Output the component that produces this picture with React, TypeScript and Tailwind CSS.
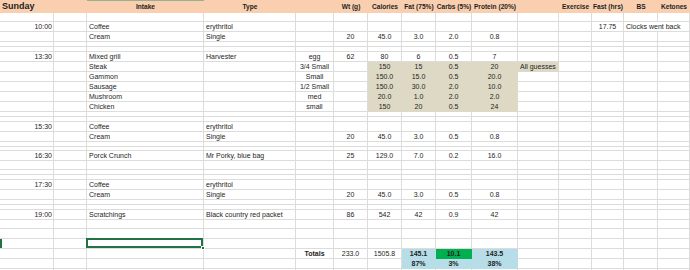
import React from "react";

type Cell = {
  t?: string;
  a?: "l" | "c" | "r";
  b?: boolean;
  fill?: string;
  nr?: boolean;
  sel?: boolean;
  rowSel?: boolean;
};

type Row = { h: string; cells: Record<number, Cell> };

const cols =
  "grid-cols-[54px_33px_117px_92px_38px_34px_34px_34px_36px_46px_41px_33px_32px_34px_1fr]";

const tan = "bg-[#ddd9c4] border-[#ddd9c4]";
const blue = "bg-[#b7dee8] border-[#b7dee8]";
const green = "bg-[#00b050] border-[#00b050]";

const r = (h: string, cells: Record<number, Cell> = {}): Row => ({ h, cells });

// numbers in F..J are centred
const nums = (vals: string[], fill?: string, from = 5): Record<number, Cell> => {
  const out: Record<number, Cell> = {};
  vals.forEach((v, i) => {
    if (v !== "") out[from + i] = { t: v, a: "c", fill: i >= 1 ? fill : undefined };
  });
  return out;
};

const tanRow = (
  name: string,
  size: string,
  vals: string[],
  extra: Record<number, Cell> = {}
): Row =>
  r("h-[10px]", {
    2: { t: name },
    4: { t: size, a: "c" },
    6: { t: vals[0], a: "c", fill: tan },
    7: { t: vals[1], a: "c", fill: tan },
    8: { t: vals[2], a: "c", fill: tan },
    9: { t: vals[3], a: "c", fill: tan },
    ...extra,
  });

const rows: Row[] = [
  r("h-[9px]"),
  r("h-[10px]", {
    0: { t: "10:00", a: "r" },
    2: { t: "Coffee" },
    3: { t: "erythritol" },
    12: { t: "17.75", a: "c" },
    13: { t: "Clocks went back", nr: true },
  }),
  r("h-[10px]", { 2: { t: "Cream" }, 3: { t: "Single" }, ...nums(["20", "45.0", "3.0", "2.0", "0.8"]) }),
  r("h-[5px]"),
  r("h-[5px]"),
  r("h-[10px]", {
    0: { t: "13:30", a: "r" },
    2: { t: "Mixed grill" },
    3: { t: "Harvester" },
    4: { t: "egg", a: "c" },
    ...nums(["62", "80", "6", "0.5", "7"]),
  }),
  tanRow("Steak", "3/4 Small", ["150", "15", "0.5", "20"], { 10: { t: "All guesses", fill: tan } }),
  tanRow("Gammon", "Small", ["150.0", "15.0", "0.5", "20.0"]),
  tanRow("Sausage", "1/2 Small", ["150.0", "30.0", "2.0", "10.0"]),
  tanRow("Mushroom", "med", ["20.0", "1.0", "2.0", "2.0"]),
  tanRow("Chicken", "small", ["150", "20", "0.5", "24"]),
  r("h-[5px]"),
  r("h-[5px]"),
  r("h-[10px]", { 0: { t: "15:30", a: "r" }, 2: { t: "Coffee" }, 3: { t: "erythritol" } }),
  r("h-[10px]", { 2: { t: "Cream" }, 3: { t: "Single" }, ...nums(["20", "45.0", "3.0", "0.5", "0.8"]) }),
  r("h-[5px]"),
  r("h-[4px]"),
  r("h-[10px]", {
    0: { t: "16:30", a: "r" },
    2: { t: "Porck Crunch" },
    3: { t: "Mr Porky, blue bag" },
    ...nums(["25", "129.0", "7.0", "0.2", "16.0"]),
  }),
  r("h-[9px]"),
  r("h-[5px]"),
  r("h-[5px]"),
  r("h-[10px]", { 0: { t: "17:30", a: "r" }, 2: { t: "Coffee" }, 3: { t: "erythritol" } }),
  r("h-[10px]", { 2: { t: "Cream" }, 3: { t: "Single" }, ...nums(["20", "45.0", "3.0", "0.5", "0.8"]) }),
  r("h-[5px]"),
  r("h-[5px]"),
  r("h-[10px]", {
    0: { t: "19:00", a: "r" },
    2: { t: "Scratchings" },
    3: { t: "Black country red packet" },
    ...nums(["86", "542", "42", "0.9", "42"]),
  }),
  r("h-[9px]"),
  r("h-[10px]"),
  r("h-[10px]", { 0: { rowSel: true }, 2: { sel: true } }),
  r("h-[10px]", {
    4: { t: "Totals", a: "c", b: true },
    5: { t: "233.0", a: "c" },
    6: { t: "1505.8", a: "c" },
    7: { t: "145.1", a: "c", b: true, fill: blue },
    8: { t: "10.1", a: "c", b: true, fill: green },
    9: { t: "143.5", a: "c", b: true, fill: blue },
  }),
  r("h-[10px]", {
    7: { t: "87%", a: "c", b: true, fill: blue },
    8: { t: "3%", a: "c", b: true, fill: blue },
    9: { t: "38%", a: "c", b: true, fill: blue },
  }),
  r("h-[2px]"),
];

const headers = [
  "",
  "",
  "Intake",
  "Type",
  "",
  "Wt (g)",
  "Calories",
  "Fat (75%)",
  "Carbs (5%)",
  "Protein (20%)",
  "",
  "Exercise",
  "Fast (hrs)",
  "BS",
  "Ketones",
];

const CellView: React.FC<{ c?: Cell }> = ({ c }) => {
  const align =
    c?.a === "c" ? "justify-center" : c?.a === "r" ? "justify-end pr-[1px]" : "justify-start pl-[2px]";
  const border = c?.fill ?? "border-[#dcdcdc]";
  return (
    <div
      className={`relative flex items-center whitespace-nowrap border-b ${c?.nr ? "" : "border-r"} ${border} ${align} ${
        c?.b ? "font-bold" : ""
      } ${c?.rowSel ? "shadow-[inset_2px_0_0_#217346]" : ""}`}
    >
      {c?.t && <span className="leading-none">{c.t}</span>}
      {c?.sel && (
        <>
          <div className="absolute -left-[1px] -top-[1px] -right-0 -bottom-0 z-10 border-2 border-[#217346]" />
          <div className="absolute -right-[2px] -bottom-[2px] z-20 h-[4px] w-[4px] border border-white bg-[#217346]" />
        </>
      )}
    </div>
  );
};

export default function App() {
  return (
    <div
      className="h-[270px] w-[690px] overflow-hidden bg-white text-[7px] text-[#1e1e1e]"
      style={{ fontFamily: '"Liberation Sans", Arial, sans-serif' }}
    >
      <div className={`grid ${cols} h-[13px] bg-[#f9cfaf]`}>
        {headers.map((h, i) =>
          i === 0 ? (
            <div key={i} className="relative flex items-center pl-[2px]">
              <span className="absolute left-[2px] whitespace-nowrap text-[9px] font-bold leading-none">
                Sunday
              </span>
            </div>
          ) : (
            <div
              key={i}
              className={`flex items-center justify-center whitespace-nowrap text-[6.6px] font-bold ${
                i === 2 ? "border-t border-[#9aae90]" : ""
              }`}
            >
              {h}
            </div>
          )
        )}
      </div>
      {rows.map((row, ri) => (
        <div key={ri} className={`grid ${cols} ${row.h}`}>
          {Array.from({ length: 15 }, (_, ci) => (
            <CellView key={ci} c={row.cells[ci]} />
          ))}
        </div>
      ))}
    </div>
  );
}
